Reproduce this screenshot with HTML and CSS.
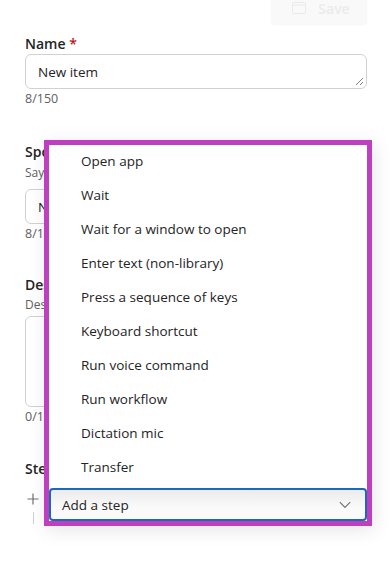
FILE: index.html
```html
<!DOCTYPE html>
<html>
<head>
<meta charset="utf-8">
<link rel="stylesheet" href="styles.css">
</head>
<body>
<div class="page">
  <div class="topbar">
    <button class="save-btn" disabled>
      <svg width="14" height="12" viewBox="0 0 14 12"><rect x="0.5" y="0.5" width="13" height="11" rx="1.5" fill="none" stroke="currentColor"/><line x1="0.5" y1="3" x2="13.5" y2="3" stroke="currentColor"/></svg>
      <span>Save</span>
    </button>
  </div>

  <div class="field field-name">
    <div class="label">Name <span class="req">*</span></div>
    <div class="input input-resize">New item<span class="grip"></span></div>
    <div class="counter">8/150</div>
  </div>

  <div class="field field-spoken">
    <div class="label">Spoken phrase</div>
    <div class="hint">Say this phrase to run the item</div>
    <div class="input input-spoken">New item</div>
    <div class="counter">8/150</div>
  </div>

  <div class="field field-desc">
    <div class="label">Description</div>
    <div class="hint">Describe what this item does</div>
    <div class="input textarea"></div>
    <div class="counter">0/1000</div>
  </div>

  <div class="field field-steps">
    <div class="label">Steps</div>
    <div class="steps-row">
      <div class="plus-col">
        <svg width="12" height="12" viewBox="0 0 12 12"><path d="M6 0.5V11.5M0.5 6H11.5" stroke="#707070" stroke-width="1.2"/></svg>
        <span class="vline"></span>
      </div>
    </div>
  </div>

  <div class="menu">
    <ul class="menu-list">
      <li>Open app</li>
      <li>Wait</li>
      <li>Wait for a window to open</li>
      <li>Enter text (non-library)</li>
      <li>Press a sequence of keys</li>
      <li>Keyboard shortcut</li>
      <li>Run voice command</li>
      <li>Run workflow</li>
      <li>Dictation mic</li>
      <li>Transfer</li>
    </ul>
    <div class="combo">
      <span>Add a step</span>
      <svg width="12" height="8" viewBox="0 0 12 8"><path d="M0.8 1.2L6 6.4L11.2 1.2" fill="none" stroke="#707070" stroke-width="1.1"/></svg>
    </div>
  </div>
</div>
</body>
</html>
```

FILE: styles.css
```css
* { box-sizing: border-box; }
html, body { margin: 0; padding: 0; background: #fff; }
body {
  font-family: "Segoe UI", "Open Sans", "Noto Sans", sans-serif;
  color: #242424;
  font-size: 13.5px;
}
.page {
  position: relative;
  width: 392px;
  height: 561px;
  padding: 0 25px;
  overflow: hidden;
}
.topbar {
  display: flex;
  justify-content: flex-end;
  height: 34px;
}
.save-btn {
  margin-top: -8px;
  width: 96px;
  height: 32px;
  border: none;
  border-radius: 4px;
  background: #f9f9f9;
  box-shadow: 0 1px 2px rgba(0,0,0,0.04);
  color: #ebebeb;
  font-family: inherit;
  font-size: 14px;
  font-weight: 600;
  display: flex;
  align-items: center;
  justify-content: center;
  gap: 12px;
  padding: 0 0 0 4px;
}
.field { display: flex; flex-direction: column; }
.label { font-weight: 600; line-height: 20px; height: 20px; font-size: 14px; }
.req { color: #c50f1f; font-weight: 600; }
.hint { font-size: 12px; line-height: 16px; color: #616161; }
.input {
  border: 1px solid #d1d1d1;
  border-radius: 6px;
  height: 35px;
  padding: 0 12px;
  display: flex;
  align-items: center;
  line-height: 20px;
  position: relative;
}
.grip {
  position: absolute;
  right: 3px;
  bottom: 3px;
  width: 7px;
  height: 7px;
  background: linear-gradient(135deg, transparent 45%, #808080 45%, #808080 55%, transparent 55%, transparent 72%, #808080 72%, #808080 82%, transparent 82%);
}
.counter { font-size: 12.5px; line-height: 16px; color: #616161; margin-top: 2px; }
.field-name { margin-bottom: 35px; }
.field-spoken .hint { margin-top: 3px; }
.field-spoken .input { margin-top: 8px; }
.field-spoken { margin-bottom: 33px; }
.field-desc .hint { margin-top: 2px; }
.field-desc .textarea { margin-top: 3px; height: 91px; }
.field-desc { margin-bottom: 34px; }
.steps-row { display: flex; margin-top: 14px; }
.plus-col { display: flex; flex-direction: column; align-items: center; width: 16px; gap: 7px; }
.vline { width: 1px; height: 12px; background: #d1d1d1; }

.menu {
  position: absolute;
  left: 44px;
  top: 140px;
  width: 328px;
  height: 386px;
  border: 5px solid #bf40bf;
  background: #fff;
  box-shadow: 2px 4px 18px rgba(0,0,0,0.10);
  display: flex;
  flex-direction: column;
}
.menu-list {
  list-style: none;
  margin: 0;
  padding: 0;
}
.menu-list li {
  height: 34px;
  line-height: 32px;
  padding-left: 32px;
  white-space: nowrap;
}
.combo {
  margin-top: 3px;
  height: 33px;
  border: 2px solid #1b6ab7;
  border-radius: 4px;
  background: linear-gradient(#ebebeb, #fafafa 60%);
  display: flex;
  align-items: center;
  justify-content: space-between;
  padding: 0 14px 0 11px;
}
```
